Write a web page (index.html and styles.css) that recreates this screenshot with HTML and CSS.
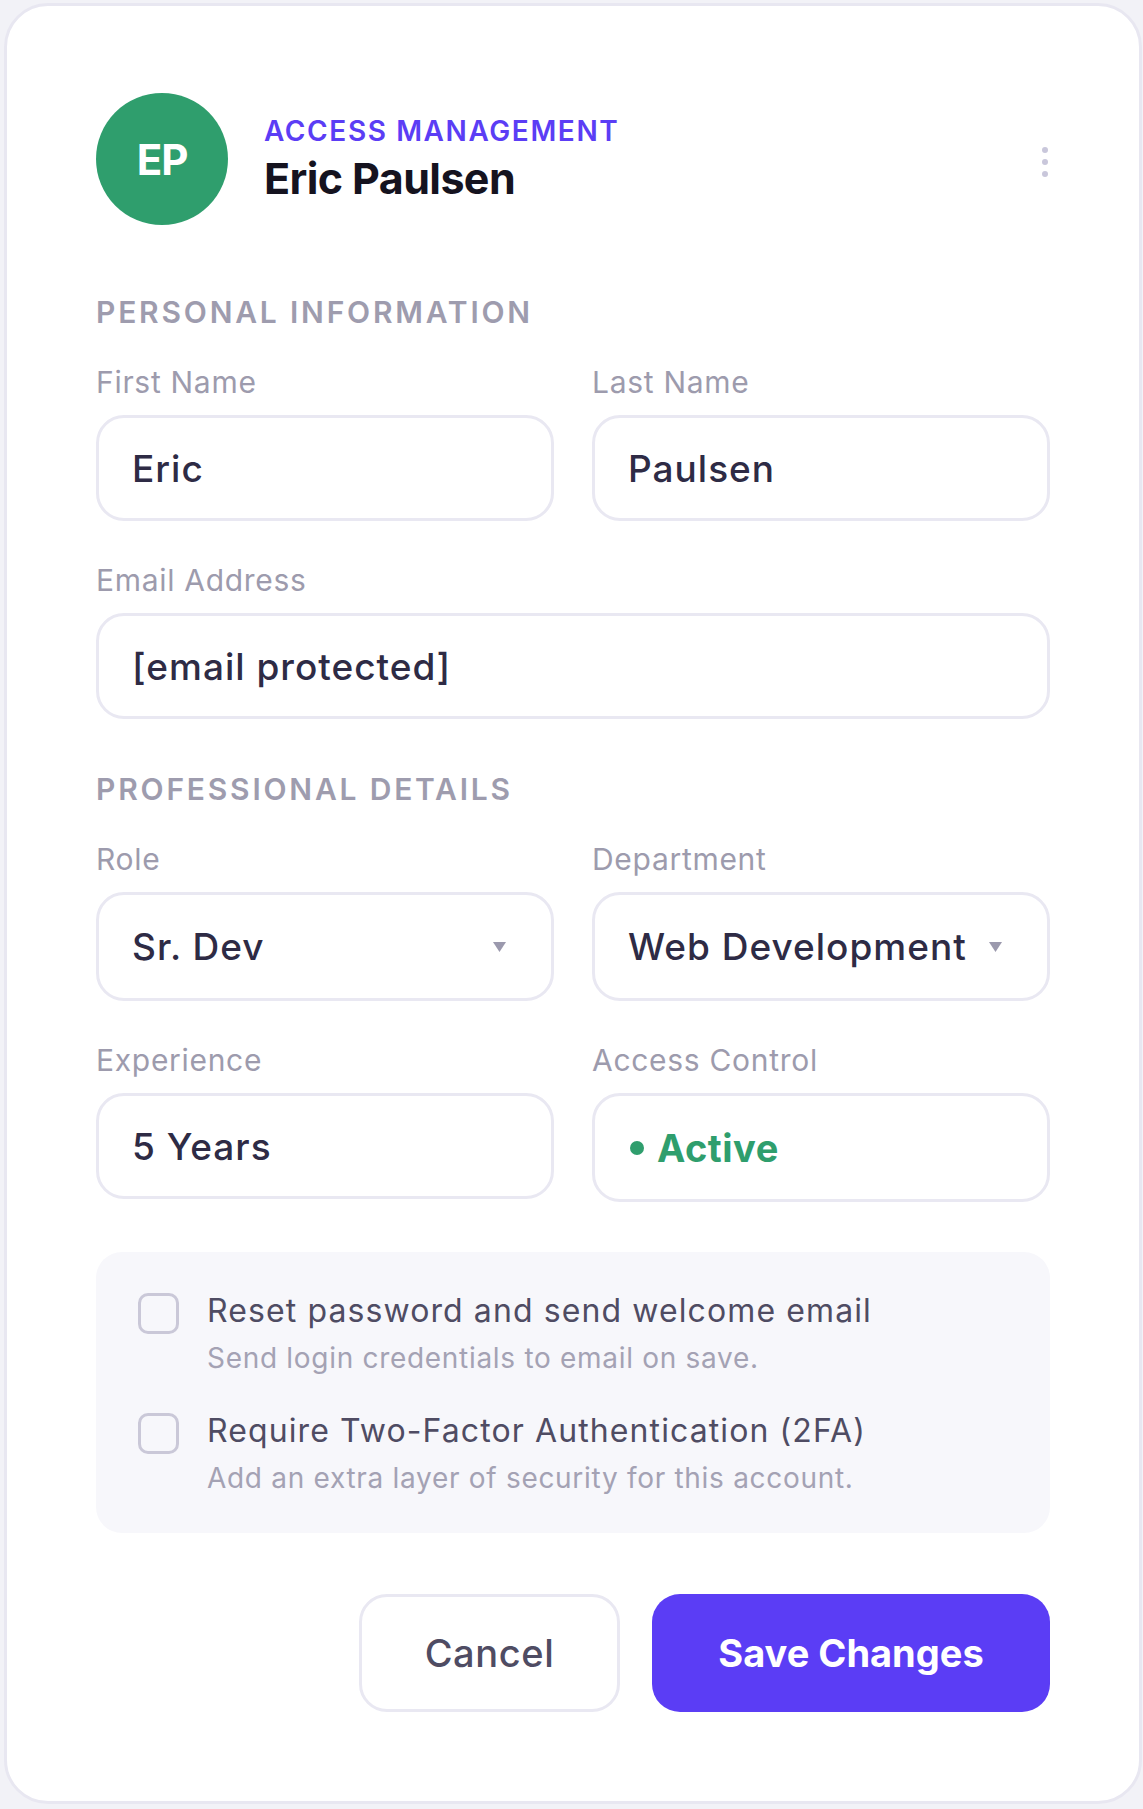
FILE: index.html
```html
<!DOCTYPE html>
<html lang="en">
    <head>
        <meta charset="UTF-8">
        <meta name="viewport" content="width=device-width, initial-scale=1.0">
        <title>Edit Member - Access Management</title>
        <link rel="stylesheet" href="styles.css">
    </head>

    <body>
        <div class="card">
            <div class="header">
                <div class="avatar">EP</div>
                <div class="header-text">
                    <div class="eyebrow">ACCESS MANAGEMENT</div>
                    <h1 class="name">Eric Paulsen</h1>
                </div>
                <div class="kebab">
                    <span></span>
                    <span></span>
                    <span></span>
                </div>
            </div>

            <h2 class="section-title personal">PERSONAL INFORMATION</h2>
            <div class="grid">
                <div class="field">
                    <label for="first-name">First Name</label>
                    <input type="text" id="first-name" value="Eric">
                </div>
                <div class="field">
                    <label for="last-name">Last Name</label>
                    <input type="text" id="last-name" value="Paulsen">
                </div>
                <div class="field wide">
                    <label for="email">Email Address</label>
                    <input type="text" id="email" value="[email protected]">
                </div>
            </div>

            <h2 class="section-title">PROFESSIONAL DETAILS</h2>
            <div class="grid">
                <div class="field">
                    <label>Role</label>
                    <div class="select">
                        <span>Sr. Dev</span>
                        <svg class="caret" width="13" height="10" viewBox="0 0 13 10"><path d="M0 0h13L6.5 10z"/></svg>
                    </div>
                </div>
                <div class="field">
                    <label>Department</label>
                    <div class="select">
                        <span>Web Development</span>
                        <svg class="caret" width="13" height="10" viewBox="0 0 13 10"><path d="M0 0h13L6.5 10z"/></svg>
                    </div>
                </div>
                <div class="field">
                    <label for="experience">Experience</label>
                    <input type="text" id="experience" value="5 Years">
                </div>
                <div class="field">
                    <label>Access Control</label>
                    <div class="status">
                        <span class="dot"></span>
                        <span>Active</span>
                    </div>
                </div>
            </div>

            <div class="options">
                <label class="option">
                    <span class="checkbox"></span>
                    <span class="option-text">
                        <span class="option-title">Reset password and send welcome email</span>
                        <span class="option-hint">Send login credentials to email on save.</span>
                    </span>
                </label>
                <label class="option">
                    <span class="checkbox"></span>
                    <span class="option-text">
                        <span class="option-title">Require Two-Factor Authentication (2FA)</span>
                        <span class="option-hint">Add an extra layer of security for this account.</span>
                    </span>
                </label>
            </div>

            <div class="actions">
                <button class="btn btn-cancel">Cancel</button>
                <button class="btn btn-save">Save Changes</button>
            </div>
        </div>
    </body>
</html>
```

FILE: styles.css
```css
* {
    box-sizing: border-box;
}

body {
    margin: 0;
    padding: 3px 1px 7px 4px;
    background-color: #f2f2f7;
    font-family: 'Inter', 'Noto Sans', sans-serif;
    color: #2e2b45;
}

.card {
    width: 1138px;
    background-color: #ffffff;
    border: 3px solid #e8e7f1;
    border-radius: 44px;
    padding: 87px 89px 89px;
}

/* header */
.header {
    display: flex;
    align-items: center;
}

.avatar {
    width: 132px;
    height: 132px;
    border-radius: 50%;
    background-color: #2f9e6d;
    color: #ffffff;
    font-size: 42px;
    font-weight: 700;
    letter-spacing: -1px;
    display: flex;
    align-items: center;
    justify-content: center;
    flex-shrink: 0;
}

.header-text {
    margin-left: 36px;
}

.eyebrow {
    font-size: 28px;
    line-height: 34px;
    font-weight: 600;
    letter-spacing: 1.6px;
    color: #5b3df5;
}

.name {
    margin: 4px 0 0;
    font-size: 43px;
    line-height: 52px;
    font-weight: 700;
    letter-spacing: -0.6px;
    color: #15131f;
}

.kebab {
    margin-left: auto;
    margin-right: 2px;
    margin-top: 6px;
    display: flex;
    flex-direction: column;
    gap: 6px;
}

.kebab span {
    width: 6px;
    height: 6px;
    border-radius: 50%;
    background-color: #c9c7db;
}

/* sections */
.section-title {
    margin: 52px 0 34px;
    font-size: 30px;
    line-height: 36px;
    font-weight: 600;
    letter-spacing: 2.8px;
    color: #9e9cae;
}

.section-title.personal {
    margin-top: 69px;
}

.grid {
    display: grid;
    grid-template-columns: 1fr 1fr;
    column-gap: 38px;
    row-gap: 41px;
    align-items: start;
}

.field {
    display: flex;
    flex-direction: column;
}

.field.wide {
    grid-column: span 2;
}

.field label {
    font-size: 30px;
    line-height: 36px;
    font-weight: 400;
    letter-spacing: 0.7px;
    color: #9d9bad;
    margin-bottom: 15px;
}

.field input,
.select,
.status {
    width: 100%;
    height: 106px;
    border: 3px solid #e9e8f2;
    border-radius: 28px;
    padding: 0 33px;
    background-color: #ffffff;
    font-family: inherit;
    font-size: 37px;
    font-weight: 500;
    letter-spacing: 1px;
    color: #2e2b45;
    outline: none;
}

.select {
    height: 109px;
    display: flex;
    align-items: center;
    justify-content: space-between;
    padding-right: 45px;
    white-space: nowrap;
}

.caret {
    fill: #9b99ad;
    flex-shrink: 0;
    margin-left: 6px;
}

.status {
    height: 109px;
    display: flex;
    align-items: center;
    gap: 13px;
    padding-left: 35px;
    font-size: 38px;
    font-weight: 700;
    letter-spacing: 0.5px;
    color: #2f9e6d;
}

.dot {
    width: 14px;
    height: 14px;
    border-radius: 50%;
    background-color: #2f9e6d;
}

/* checkbox panel */
.options {
    margin-top: 50px;
    background-color: #f7f7fb;
    border-radius: 26px;
    padding: 39px 42px 38px;
    display: flex;
    flex-direction: column;
    gap: 36px;
}

.option {
    display: flex;
    align-items: flex-start;
    gap: 28px;
    cursor: pointer;
}

.checkbox {
    width: 41px;
    height: 41px;
    margin-top: 2px;
    border: 3px solid #cac8d8;
    border-radius: 10px;
    flex-shrink: 0;
}

.option-text {
    display: flex;
    flex-direction: column;
}

.option-title {
    font-size: 32px;
    line-height: 40px;
    font-weight: 400;
    letter-spacing: 1.1px;
    color: #4f4c63;
}

.option-hint {
    margin-top: 10px;
    font-size: 28px;
    line-height: 34px;
    font-weight: 400;
    letter-spacing: 0.7px;
    color: #a4a2b4;
}

/* buttons */
.actions {
    margin-top: 61px;
    display: flex;
    justify-content: flex-end;
    gap: 32px;
}

.btn {
    height: 118px;
    border-radius: 28px;
    font-family: inherit;
    font-size: 38px;
    cursor: pointer;
}

.btn-cancel {
    width: 261px;
    background-color: #ffffff;
    border: 3px solid #e9e8f2;
    color: #4f4c63;
    font-weight: 500;
    letter-spacing: 0.6px;
}

.btn-save {
    width: 398px;
    background-color: #5b3df5;
    border: none;
    color: #ffffff;
    font-weight: 700;
}
```
